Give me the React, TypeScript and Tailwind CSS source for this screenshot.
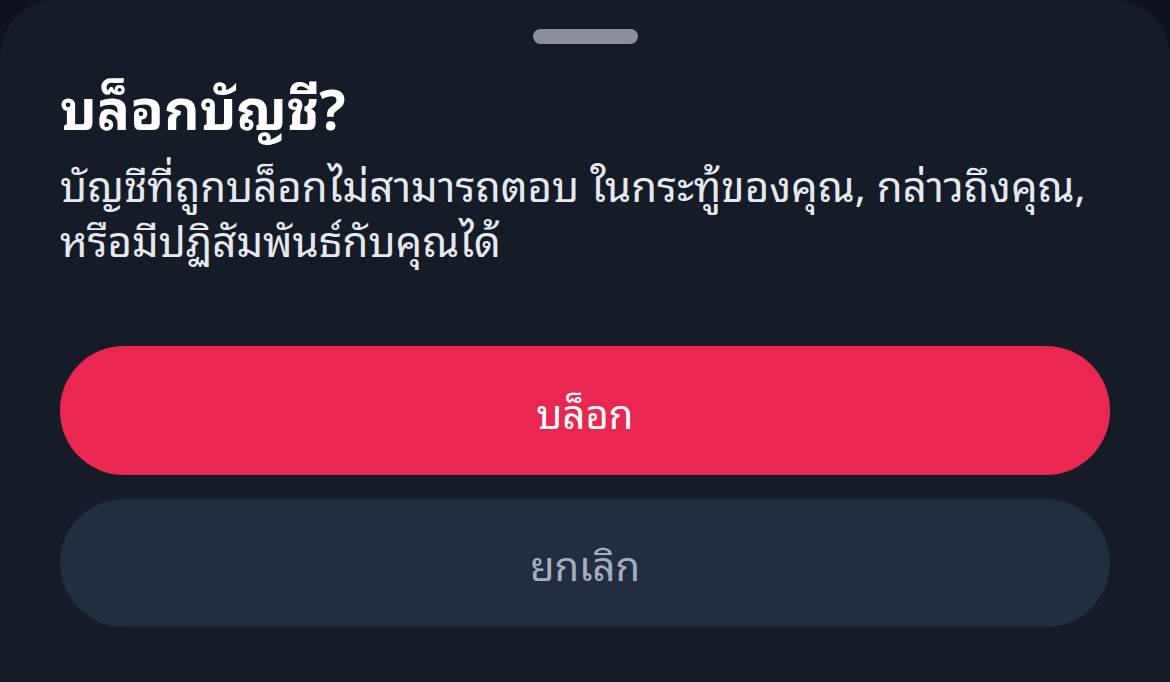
export default function App() {
  return (
    <div
      className="flex h-[682px] w-[1170px] flex-col overflow-hidden bg-[#0e121a]"
      style={{ fontFamily: '"Noto Sans Thai Looped", "Noto Sans", sans-serif' }}
    >
      <div className="flex flex-1 flex-col rounded-t-[56px] bg-[#161c27] px-[60px]">
        <div className="flex justify-center pt-[29px]">
          <div className="h-[15px] w-[105px] rounded-full bg-[#8a8f98]" />
        </div>
        <h1 className="mt-[26px] text-[55px] font-bold leading-[70px] text-white">
          บล็อกบัญชี?
        </h1>
        <p className="mt-[16px] whitespace-nowrap text-[42px] leading-[55px] text-[#e6e9ef]">
          บัญชีที่ถูกบล็อกไม่สามารถตอบ ในกระทู้ของคุณ, กล่าวถึงคุณ,
          <br />
          หรือมีปฏิสัมพันธ์กับคุณได้
        </p>
        <div className="mt-[80px] flex flex-col gap-[24px]">
          <button
            type="button"
            className="flex h-[129px] items-center justify-center rounded-[64px] bg-[#e92751] text-[40px] text-white"
          >
            บล็อก
          </button>
          <button
            type="button"
            className="flex h-[128px] items-center justify-center rounded-[64px] bg-[#222d3f] text-[40px] text-[#a3aec2]"
          >
            ยกเลิก
          </button>
        </div>
      </div>
    </div>
  );
}
